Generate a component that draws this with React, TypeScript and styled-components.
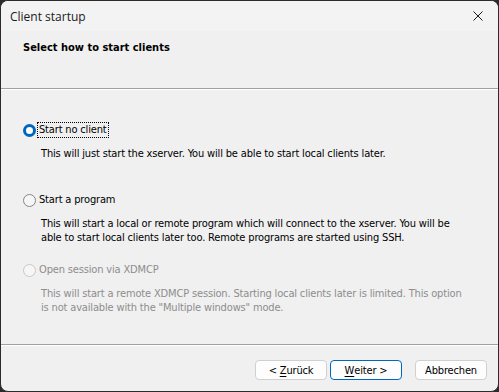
import styled, { createGlobalStyle } from "styled-components";

const GlobalStyle = createGlobalStyle`
  html, body {
    margin: 0;
    padding: 0;
    background: #2b2b2b;
  }
  * {
    box-sizing: border-box;
  }
`;

interface OptionData {
  label: string;
  description: string;
  checked?: boolean;
  disabled?: boolean;
  focused?: boolean;
}

const options: OptionData[] = [
  {
    label: "Start no client",
    description:
      "This will just start the xserver. You will be able to start local clients later.",
    checked: true,
    focused: true,
  },
  {
    label: "Start a program",
    description:
      "This will start a local or remote program which will connect to the xserver. You will be able to start local clients later too. Remote programs are started using SSH.",
  },
  {
    label: "Open session via XDMCP",
    description:
      'This will start a remote XDMCP session. Starting local clients later is limited. This option is not available with the "Multiple windows" mode.',
    disabled: true,
  },
];

const App = () => {
  return (
    <>
      <GlobalStyle />
      <Window>
        <TitleBar>
          <WindowTitle>Client startup</WindowTitle>
          <CloseButton aria-label="Close">
            <svg width="10" height="10" viewBox="0 0 10 10">
              <path d="M0.5 0.5 L9.5 9.5 M9.5 0.5 L0.5 9.5" stroke="#1a1a1a" strokeWidth="1" />
            </svg>
          </CloseButton>
        </TitleBar>

        <Header>
          <HeaderTitle>Select how to start clients</HeaderTitle>
        </Header>

        <Content>
          {options.map((option) => (
            <Option key={option.label}>
              <RadioRow $disabled={option.disabled}>
                <Radio $checked={option.checked} $disabled={option.disabled} />
                <RadioLabel $focused={option.focused}>{option.label}</RadioLabel>
              </RadioRow>
              <Description $disabled={option.disabled}>{option.description}</Description>
            </Option>
          ))}
        </Content>

        <Footer>
          <Button>
            {"< "}
            <u>Z</u>urück
          </Button>
          <Button $default>
            <u>W</u>
            {"eiter >"}
          </Button>
          <CancelButton>Abbrechen</CancelButton>
        </Footer>
      </Window>
    </>
  );
};

const Window = styled.div`
  display: flex;
  flex-direction: column;

  width: 499px;
  height: 392px;

  background: #f0f0f0;
  border: 1px solid #2b2b2b;
  border-radius: 8px;
  overflow: hidden;
`;

const TitleBar = styled.div`
  display: flex;
  align-items: center;
  justify-content: space-between;

  height: 30px;
  padding-left: 9px;

  background: #f3f3f3;
`;

const WindowTitle = styled.span`
  font-family: "Open Sans", "Noto Sans", sans-serif;
  font-size: 12px;
  color: #1a1a1a;
`;

const CloseButton = styled.div`
  display: flex;
  align-items: center;
  justify-content: center;

  width: 46px;
  height: 30px;
  padding-left: 6px;
`;

const Header = styled.div`
  height: 58px;
  padding: 10px 22px 0;

  border-bottom: 1px solid #a0a0a0;
  box-shadow: 0 1px 0 #ffffff;
`;

const HeaderTitle = styled.h1`
  margin: 0;

  font-family: "DejaVu Sans Condensed", "DejaVu Sans", sans-serif;
  font-size: 11px;
  font-weight: bold;
  line-height: 14px;
  color: #000000;
`;

const Content = styled.div`
  display: flex;
  flex-direction: column;
  gap: 18px;

  flex: 1;
  padding: 34px 33px 0 22px;

  font-family: "DejaVu Sans Condensed", "DejaVu Sans", sans-serif;
  font-size: 11px;
  line-height: 14px;
  letter-spacing: -0.16px;
`;

const Option = styled.div`
  display: flex;
  flex-direction: column;
  gap: 10px;
`;

const RadioRow = styled.div<{ $disabled?: boolean }>`
  display: flex;
  align-items: center;
  gap: 2px;

  height: 14px;
  color: ${({ $disabled }) => ($disabled ? "#8d8d8d" : "#000000")};
`;

const Radio = styled.span<{ $checked?: boolean; $disabled?: boolean }>`
  display: inline-block;
  flex: none;

  width: 13px;
  height: 13px;
  border-radius: 50%;

  background: ${({ $checked }) => ($checked ? "#ffffff" : "#f6f6f6")};
  border: ${({ $checked, $disabled }) =>
    $checked ? "3.5px solid #0067c0" : $disabled ? "1px solid #c8c8c8" : "1px solid #858585"};
`;

const RadioLabel = styled.span<{ $focused?: boolean }>`
  padding: 0 1px;
  outline: ${({ $focused }) => ($focused ? "1px dotted #000000" : "none")};
`;

const Description = styled.p<{ $disabled?: boolean }>`
  min-height: 28px;
  margin: 0 0 0 18px;

  color: ${({ $disabled }) => ($disabled ? "#8d8d8d" : "#000000")};
`;

const Footer = styled.div`
  display: flex;
  justify-content: flex-end;
  gap: 3px;

  height: 47px;
  padding: 15px 11px 0 0;

  border-top: 1px solid #a0a0a0;
  box-shadow: inset 0 1px 0 #ffffff;
`;

const Button = styled.div<{ $default?: boolean }>`
  display: flex;
  align-items: center;
  justify-content: center;
  white-space: pre;

  width: 72px;
  height: 20px;

  font-family: "DejaVu Sans Condensed", "DejaVu Sans", sans-serif;
  font-size: 11px;
  letter-spacing: -0.16px;
  color: #000000;

  background: #fdfdfd;
  border: 1px solid ${({ $default }) => ($default ? "#0067c0" : "#d0d0d0")};
  border-radius: 4px;

  u {
    text-underline-offset: 2px;
  }
`;

const CancelButton = styled(Button)`
  margin-left: 10px;
`;

export default App;
